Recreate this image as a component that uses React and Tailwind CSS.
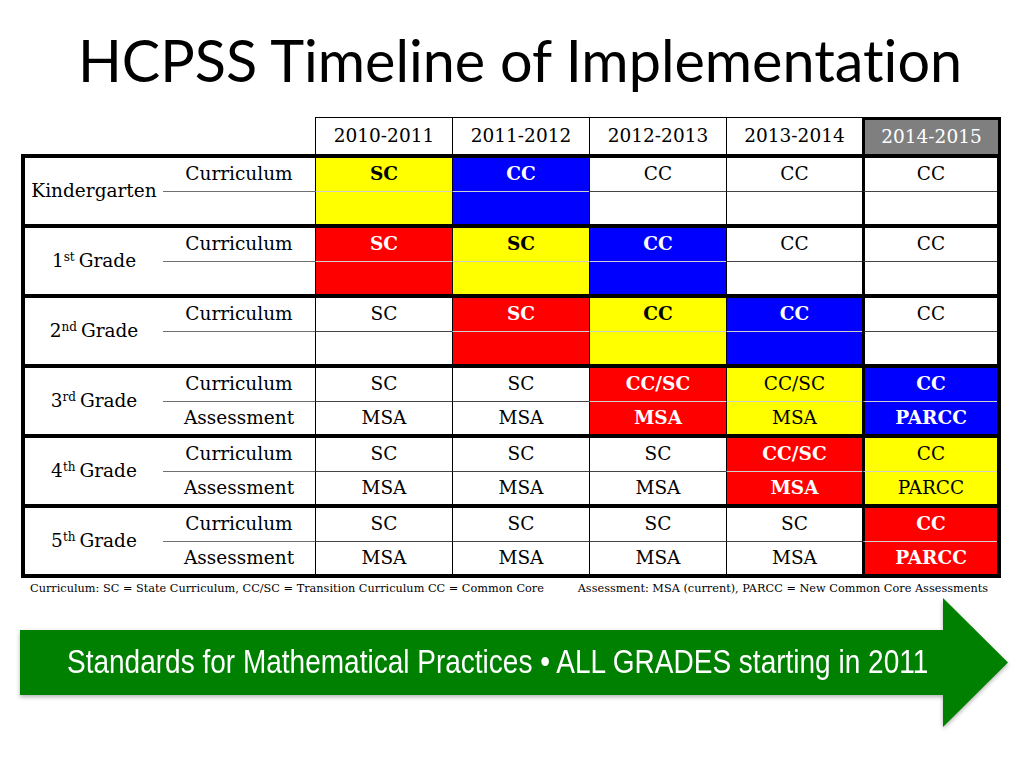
import React from 'react';

const Y = 'bg-[#ffff00] text-black';
const B = 'bg-[#0000ff] text-white font-bold';
const R = 'bg-[#ff0000] text-white font-bold';

const years = ['2010-2011', '2011-2012', '2012-2013', '2013-2014'];

// each cell: [top text, bottom text, colour classes]
const grades = [
  {
    label: 'Kindergarten',
    subs: ['Curriculum', ''],
    cells: [
      ['SC', '', Y + ' font-bold'],
      ['CC', '', B],
      ['CC', '', ''],
      ['CC', '', ''],
      ['CC', '', ''],
    ],
  },
  {
    label: '1',
    sup: 'st',
    subs: ['Curriculum', ''],
    cells: [
      ['SC', '', R],
      ['SC', '', Y + ' font-bold'],
      ['CC', '', B],
      ['CC', '', ''],
      ['CC', '', ''],
    ],
  },
  {
    label: '2',
    sup: 'nd',
    subs: ['Curriculum', ''],
    cells: [
      ['SC', '', ''],
      ['SC', '', R],
      ['CC', '', Y + ' font-bold'],
      ['CC', '', B],
      ['CC', '', ''],
    ],
  },
  {
    label: '3',
    sup: 'rd',
    subs: ['Curriculum', 'Assessment'],
    cells: [
      ['SC', 'MSA', ''],
      ['SC', 'MSA', ''],
      ['CC/SC', 'MSA', R],
      ['CC/SC', 'MSA', Y],
      ['CC', 'PARCC', B],
    ],
  },
  {
    label: '4',
    sup: 'th',
    subs: ['Curriculum', 'Assessment'],
    cells: [
      ['SC', 'MSA', ''],
      ['SC', 'MSA', ''],
      ['SC', 'MSA', ''],
      ['CC/SC', 'MSA', R],
      ['CC', 'PARCC', Y],
    ],
  },
  {
    label: '5',
    sup: 'th',
    subs: ['Curriculum', 'Assessment'],
    cells: [
      ['SC', 'MSA', ''],
      ['SC', 'MSA', ''],
      ['SC', 'MSA', ''],
      ['SC', 'MSA', ''],
      ['CC', 'PARCC', R],
    ],
  },
];

const GradeBlock = ({ grade, first }) => (
  <div
    className={`grid grid-cols-[138px_152px_137px_137px_137px_136px_135px] grid-rows-[33px_33px] ${
      first ? '' : 'border-t-4 border-black'
    }`}
  >
    <div className="row-span-2 flex items-center justify-center">
      {grade.sup ? (
        <span>
          {grade.label}
          <sup className="text-[12px] relative -top-[6px] mr-[4px]">{grade.sup}</sup>
          Grade
        </span>
      ) : (
        <span>{grade.label}</span>
      )}
    </div>
    {/* css grid flows row by row: top sub label + cells, then bottom */}
    <div className="flex items-center justify-center">{grade.subs[0]}</div>
    {grade.cells.map((c, i) => (
      <div
        key={'t' + i}
        className={`flex items-center justify-center ${i === 4 ? 'border-l-[3px]' : 'border-l'} border-black ${c[2] || 'bg-white'}`}
      >
        {c[0]}
      </div>
    ))}
    <div className="flex items-center justify-center border-t border-[#6f6f6f]">{grade.subs[1]}</div>
    {grade.cells.map((c, i) => (
      <div
        key={'b' + i}
        className={`flex items-center justify-center ${i === 4 ? 'border-l-[3px]' : 'border-l'} border-l-black border-t ${
          c[2] ? 'border-t-[#d0d0d0]' : 'border-t-[#444]'
        } ${c[2] || 'bg-white'}`}
      >
        {c[1]}
      </div>
    ))}
  </div>
);

const App = () => {
  return (
    <div className="w-[1024px] h-[768px] bg-white overflow-hidden">
      <h1 className="pt-[31px] pl-[16px] text-center text-[57.5px] leading-none font-['Lato',sans-serif] text-black [font-variant-ligatures:none]">
        HCPSS Timeline of Implementation
      </h1>

      <div className="ml-[21px] w-[980px] mt-[28px] font-['DejaVu_Serif',serif] text-[18.5px] text-black">
        {/* year header */}
        <div className="grid grid-cols-[294px_137px_137px_137px_136px_139px] h-[37px]">
          <div />
          {years.map((y) => (
            <div key={y} className="flex items-center justify-center border-t border-l border-black">
              {y}
            </div>
          ))}
          <div className="flex items-center justify-center border-[3px] border-b-0 border-black bg-[#7f7f7f] text-white">
            2014-2015
          </div>
        </div>

        <div className="border-4 border-black">
          {grades.map((g, i) => (
            <GradeBlock key={i} grade={g} first={i === 0} />
          ))}
        </div>

        <div className="flex justify-between pl-[9px] pr-[13px] pt-[2px] text-[11.3px] leading-[18px]">
          <span>Curriculum: SC = State Curriculum, CC/SC = Transition Curriculum CC = Common Core</span>
          <span>Assessment: MSA (current), PARCC = New Common Core Assessments</span>
        </div>
      </div>

      <div className="ml-[20px] flex items-center h-[129px] drop-shadow-[0_2px_2px_rgba(0,0,0,0.3)]">
        <div className="w-[923px] h-[65px] bg-[#008000] flex items-center pl-[47px] overflow-hidden">
          <span className="inline-block origin-left scale-x-[0.836] text-white text-[33.5px] font-['Liberation_Sans',sans-serif] whitespace-nowrap">
            Standards for Mathematical Practices • ALL GRADES starting in 2011
          </span>
        </div>
        <svg width="65" height="129" viewBox="0 0 65 129" className="block">
          <polygon points="0,0 65,64.5 0,129" fill="#008000" />
        </svg>
      </div>
    </div>
  );
};

export default App;
